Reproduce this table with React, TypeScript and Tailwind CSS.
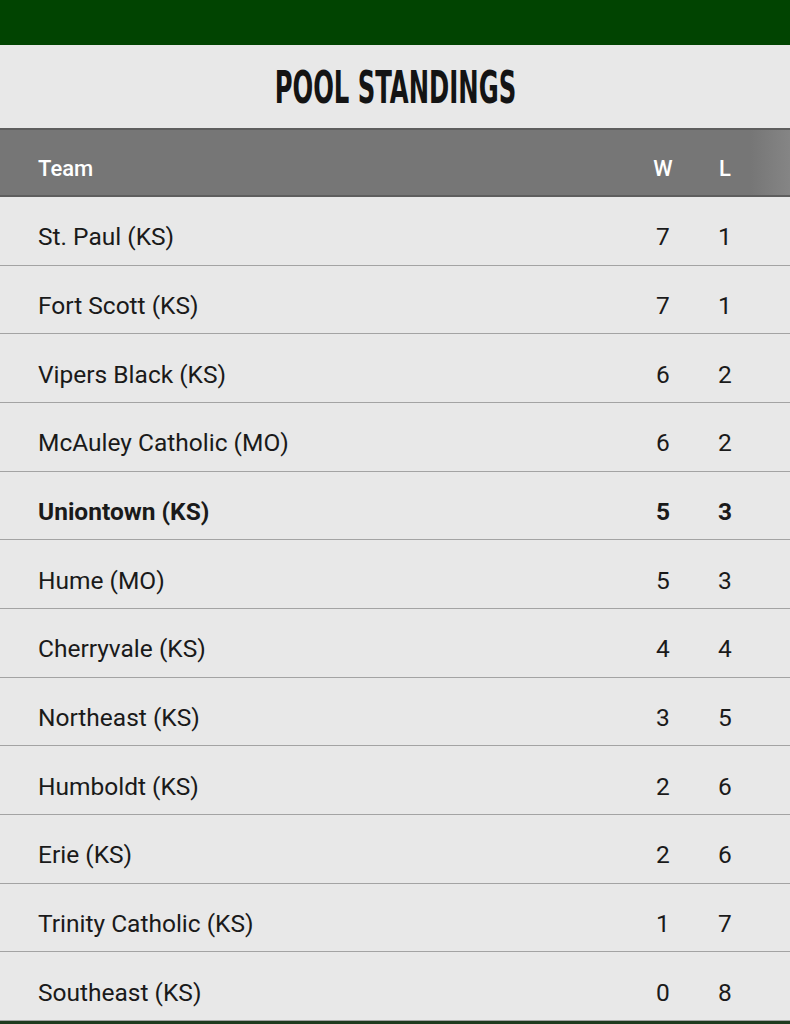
import React from 'react';

type Row = { team: string; w: number; l: number; bold?: boolean };

const ROWS: Row[] = [
  { team: 'St. Paul (KS)', w: 7, l: 1 },
  { team: 'Fort Scott (KS)', w: 7, l: 1 },
  { team: 'Vipers Black (KS)', w: 6, l: 2 },
  { team: 'McAuley Catholic (MO)', w: 6, l: 2 },
  { team: 'Uniontown (KS)', w: 5, l: 3, bold: true },
  { team: 'Hume (MO)', w: 5, l: 3 },
  { team: 'Cherryvale (KS)', w: 4, l: 4 },
  { team: 'Northeast (KS)', w: 3, l: 5 },
  { team: 'Humboldt (KS)', w: 2, l: 6 },
  { team: 'Erie (KS)', w: 2, l: 6 },
  { team: 'Trinity Catholic (KS)', w: 1, l: 7 },
  { team: 'Southeast (KS)', w: 0, l: 8 },
];

export default function App() {
  return (
    <div className="w-[790px] h-[1024px] overflow-hidden bg-[#e8e8e8] font-['Roboto',sans-serif] text-[#1a1a1a]">
      <div className="h-[45px] bg-[#014401]" />

      <div className="h-[83px] flex items-center justify-center">
        <h1 className="font-['DejaVu_Sans_Condensed',sans-serif] font-bold text-[44px] leading-none text-[#141414] scale-x-[0.615] translate-y-[1px]">
          POOL STANDINGS
        </h1>
      </div>

      <div className="h-[69px] bg-gradient-to-r from-[#767676] from-[95%] to-[#858585] border-t-2 border-b-2 border-[#5e5e5e] flex items-center text-white text-[22px] font-medium pl-[38px] pt-[12px]">
        <span className="flex-1">Team</span>
        <span className="w-[40px] text-center mr-[22px]">W</span>
        <span className="w-[40px] text-center mr-[45px]">L</span>
      </div>

      {ROWS.map((r) => (
        <div
          key={r.team}
          className={`h-[68.67px] flex items-center border-b border-[#a3a3a3] pl-[38px] pt-[14px] text-[24.5px] ${r.bold ? 'font-bold' : 'font-normal'}`}
        >
          <span className="flex-1">{r.team}</span>
          <span className="w-[40px] text-center mr-[22px]">{r.w}</span>
          <span className="w-[40px] text-center mr-[45px]">{r.l}</span>
        </div>
      ))}

      <div className="h-[4px] bg-[#1e3a1e]" />
    </div>
  );
}
